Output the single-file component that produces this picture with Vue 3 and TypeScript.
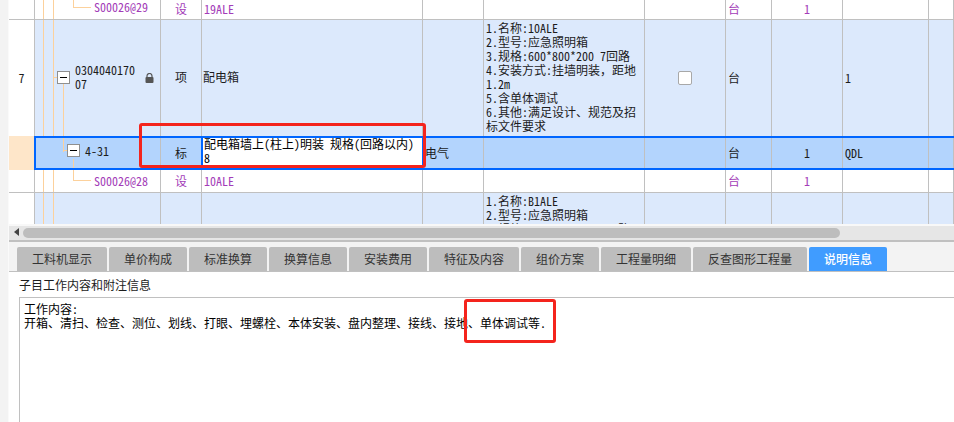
<script setup lang="ts">
const tabs: { label: string; width: number; active?: boolean }[] = [
  { label: '工料机显示', width: 90 },
  { label: '单价构成', width: 78 },
  { label: '标准换算', width: 78 },
  { label: '换算信息', width: 78 },
  { label: '安装费用', width: 78 },
  { label: '特征及内容', width: 90 },
  { label: '组价方案', width: 78 },
  { label: '工程量明细', width: 90 },
  { label: '反查图形工程量', width: 114 },
  { label: '说明信息', width: 78, active: true },
]
const feature7a = '1.名称:10ALE\n2.型号:应急照明箱\n3.规格:600*800*200 7回路\n4.安装方式:挂墙明装'
const feature7b = '距地\n1.2m\n5.含单体调试\n6.其他:满足设计、规范及招\n标文件要求'
const feature8 = '1.名称:B1ALE\n2.型号:应急照明箱\n3.规格:600*800*200 7回路'
</script>

<template>
  <div class="page">
    <div class="strip"></div>
    <main class="main">
      <section class="sheet">
        <div class="row sub first">
          <div class="c"></div>
          <div class="c tree">
            <i class="v g1"></i><i class="v g2"></i><i class="elbow e-top"></i>
            <span class="sub-code">S00026@29</span>
          </div>
          <div class="c mid">设</div>
          <div class="c txt">19ALE</div>
          <div class="c"></div><div class="c"></div><div class="c"></div>
          <div class="c txt">台</div>
          <div class="c mid">1</div>
          <div class="c"></div><div class="c"></div>
        </div>

        <div class="row parent r7">
          <div class="c no">7</div>
          <div class="c tree">
            <i class="v g1"></i><i class="v g2"></i><i class="v g3 g3-a"></i><i class="stub"></i>
            <button class="box box-a"><span></span></button>
            <span class="code">0304040170 07</span>
            <svg class="lock" viewBox="0 0 9 10" width="9" height="10"><path d="M2 4.5V3a2.5 2.5 0 0 1 5 0v1.5" fill="none" stroke="#555" stroke-width="1.2"/><rect x="0.5" y="4" width="8" height="6" rx="1" fill="#555"/></svg>
          </div>
          <div class="c mid">项</div>
          <div class="c txt name">配电箱</div>
          <div class="c"></div>
          <div class="c feat">{{ feature7a }}<span class="wide">，</span>{{ feature7b }}</div>
          <div class="c center"><span class="check"></span></div>
          <div class="c txt">台</div>
          <div class="c"></div>
          <div class="c txt">1</div>
          <div class="c"></div>
        </div>

        <div class="row selected">
          <div class="c head"></div>
          <div class="c tree">
            <i class="v g3 g3-b"></i><i class="stub2"></i><i class="v drop"></i>
            <button class="box box-b"><span></span></button>
            <span class="quota">4-31</span>
          </div>
          <div class="c mid">标</div>
          <div class="c editor">配电箱墙上(柱上)明装 规格(回路以内)<br />8</div>
          <div class="c txt">电气</div>
          <div class="c"></div>
          <div class="c"></div>
          <div class="c txt">台</div>
          <div class="c mid">1</div>
          <div class="c txt">QDL</div>
          <div class="c"></div>
          <div class="frame"></div>
        </div>

        <div class="row sub s28">
          <div class="c"></div>
          <div class="c tree">
            <i class="v g1"></i><i class="v g2"></i><i class="elbow e-mid"></i>
            <span class="sub-code">S00026@28</span>
          </div>
          <div class="c mid">设</div>
          <div class="c txt">10ALE</div>
          <div class="c"></div><div class="c"></div><div class="c"></div>
          <div class="c txt">台</div>
          <div class="c mid">1</div>
          <div class="c"></div><div class="c"></div>
        </div>

        <div class="row parent r8">
          <div class="c"></div>
          <div class="c tree"><i class="v g1"></i><i class="v g2"></i></div>
          <div class="c"></div><div class="c"></div><div class="c"></div>
          <div class="c feat">{{ feature8 }}</div>
          <div class="c"></div><div class="c"></div><div class="c"></div><div class="c"></div><div class="c"></div>
        </div>
      </section>

      <div class="scrollbar">
        <i class="arrow"></i>
        <div class="thumb"></div>
      </div>

      <nav class="tabs">
        <span
          v-for="t in tabs"
          :key="t.label"
          class="tab"
          :class="{ active: t.active }"
          :style="{ width: t.width + 'px' }"
        >{{ t.label }}</span>
      </nav>

      <section class="info">
        <div class="info-title">子目工作内容和附注信息</div>
        <div class="info-box">工作内容:<br />开箱、清扫、检查、测位、划线、打眼、埋螺栓、本体安装、盘内整理、接线、接地、单体调试等.</div>
      </section>
    </main>

    <div class="mark mark-a"></div>
    <div class="mark mark-b"></div>
  </div>
</template>

<style scoped>
.page {
  position: relative;
  display: flex;
  width: 954px;
  height: 422px;
  overflow: hidden;
  background: #fff;
  color: #1c1c1c;
  font: 12px/14px "Noto Sans CJK SC", "Liberation Sans", sans-serif;
  font-feature-settings: "hwid";
}
.strip {
  flex: 0 0 8px;
  background: #f3f3f3;
  border-right: 1px solid #fafafa;
}
.main {
  flex: 1;
  min-width: 0;
  display: flex;
  flex-direction: column;
}
.sheet {
  height: 224px;
  overflow: hidden;
  flex: none;
}
.row {
  position: relative;
  display: grid;
  grid-template-columns: 26px 126px 41px 221px 61px 161px 81px 46px 71px 86px 25px;
}
.c {
  min-width: 0;
  border-right: 1px solid #c0c0c0;
  border-bottom: 1px solid #c0c0c0;
  display: flex;
  align-items: center;
}
.first { height: 20px; }
.first .c { padding-bottom: 1px; }
.r7 { height: 116px; }
.r7 .c { border-bottom: 0; }
.selected {
  height: 34px;
  background: #b3d4fd;
}
.selected .c { border-bottom: 0; }
.s28 { height: 23px; }
.s28 .c { padding-bottom: 1px; }
.r8 { height: 120px; }
.r8 .c { align-items: flex-start; }
.parent { background: #dce9fc; }
.parent > .c:first-child { background: #fff; }
.sub { color: #a33cb8; }
.no { justify-content: center; }
.mid { justify-content: center; }
.center { justify-content: center; }
.txt { padding-left: 2px; }
.name { padding-left: 1px; padding-bottom: 2px; }
.r7 .mid { padding-bottom: 2px; }
.selected .mid { padding-bottom: 1px; }
.head { background: #fee6c9; }
.c.feat {
  display: block;
  white-space: pre;
  padding: 1px 0 0 2px;
  overflow: hidden;
}
.wide { font-feature-settings: normal; }
.editor {
  display: block;
  background: #fff;
  color: #000;
  padding: 1px 0 0 1px;
  border-left: 2px solid #0066ff;
  border-right: 1px solid #0066ff;
  margin-left: -1px;
}
.tree {
  position: relative;
}
.tree i { position: absolute; display: block; }
.v { width: 1px; background: #fcd19c; }
.g1 { left: 8px; top: 0; bottom: 0; }
.g2 { left: 18px; top: 0; bottom: 0; }
.g3 { left: 28px; }
.g3-a { top: 64px; bottom: 0; }
.g3-b { top: 0; height: 16px; }
.stub { left: 19px; top: 57px; width: 3px; height: 1px; background: #fcd19c; }
.stub2 { left: 28px; top: 14px; width: 4px; height: 1px; background: #fcd19c; }
.drop { left: 38px; top: 23px; bottom: 0; }
.elbow {
  left: 38px;
  width: 17px;
  border-left: 1px solid #fcd19c;
  border-bottom: 1px solid #fcd19c;
}
.e-top { top: 0; height: 7px; }
.e-mid { top: 0; height: 10px; }
.box {
  position: absolute;
  width: 13px;
  height: 13px;
  padding: 0;
  background: #fff;
  border: 1px solid #8f8f8f;
  display: flex;
  align-items: center;
  justify-content: center;
}
.box span { display: block; width: 7px; height: 1px; background: #000; }
.box-a { left: 22px; top: 51px; }
.box-b { left: 32px; top: 8px; }
.code {
  position: absolute;
  left: 40px;
  top: 43px;
  width: 62px;
  overflow-wrap: anywhere;
}
.lock { position: absolute; left: 110px; top: 53px; }
.quota { position: absolute; left: 50px; top: 8px; }
.sub-code { position: absolute; left: 59px; top: 0; }
.s28 .sub-code { top: 4px; }
.check {
  width: 14px;
  height: 14px;
  box-sizing: border-box;
  background: #fff;
  border: 1px solid #a8a8a8;
  border-radius: 2px;
}
.frame {
  position: absolute;
  left: 25px;
  right: 0;
  top: 0;
  bottom: 0;
  border: solid #0066ff;
  border-width: 2px 0 2px 2px;
  pointer-events: none;
}
.scrollbar {
  flex: none;
  position: relative;
  height: 14px;
  background: #e6e6e6;
  border-top: 2px solid #f8f8f8;
  border-bottom: 2px solid #c0c0c0;
}
.arrow {
  position: absolute;
  left: 5px;
  top: 2px;
  border: 4px solid transparent;
  border-right: 5px solid #444;
  border-left: 0;
}
.thumb {
  position: absolute;
  left: 14px;
  top: 2px;
  width: 817px;
  height: 10px;
  border-radius: 5px;
  background: #bdbdbd;
}
.tabs {
  flex: none;
  display: flex;
  gap: 2px;
  height: 30px;
  box-sizing: border-box;
  padding: 5px 0 0 8px;
  background: #f3f3f3;
  border-bottom: 1px solid #c0c0c0;
}
.tab {
  height: 24px;
  box-sizing: border-box;
  background: #bdbdbd;
  color: #333;
  border-radius: 2px 2px 0 0;
  display: flex;
  align-items: center;
  justify-content: center;
}
.tab.active {
  background: #409cff;
  color: #fff;
  font-weight: 500;
}
.info {
  flex: 1;
  min-height: 0;
  padding: 6px 0 0 10px;
}
.info-title { height: 19px; line-height: 14px; }
.info-box {
  height: 200px;
  box-sizing: border-box;
  border: 1px solid #c0c0c0;
  border-right: 0;
  padding: 4px 0 0 4px;
  color: #000;
  white-space: nowrap;
}
.mark {
  position: absolute;
  box-sizing: border-box;
  border: 3px solid #f4241d;
  border-radius: 3px;
  pointer-events: none;
}
.mark-a { left: 139px; top: 123px; width: 287px; height: 45px; }
.mark-b { left: 464px; top: 299px; width: 92px; height: 44px; }
</style>
